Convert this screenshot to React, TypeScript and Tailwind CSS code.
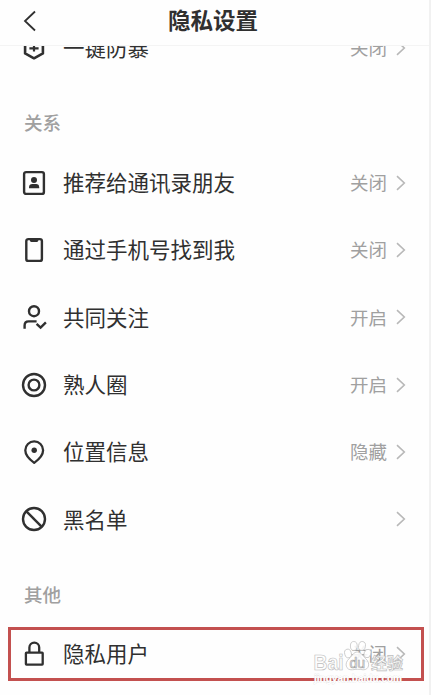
import React from 'react';

const ShieldIcon = () => (
  <svg viewBox="0 0 26 26" className="w-[26px] h-[26px]" fill="none" stroke="currentColor" strokeWidth="2.6" strokeLinejoin="round">
    <path d="M13 1.5 4.1 4.8v13.6l8.9 4.9 8.9-4.9V4.8z" />
    <path d="M13 7.5v9M8.4 13.4h9.2" strokeWidth="2.2" />
  </svg>
);

const ContactIcon = () => (
  <svg viewBox="0 0 26 26" className="w-[26px] h-[26px]" fill="none" stroke="currentColor" strokeWidth="2.4">
    <rect x="3.1" y="2.1" width="19.8" height="21.8" rx="2" />
    <circle cx="13" cy="9.9" r="3" fill="currentColor" stroke="none" />
    <path d="M8 18.3v-1.1c0-2 1.4-3.1 3.3-3.1h3.8c1.9 0 3.1 1.1 3.1 3.1v1.1z" fill="currentColor" stroke="none" />
  </svg>
);

const PhoneIcon = () => (
  <svg viewBox="0 0 26 26" className="w-[26px] h-[26px]" fill="none" stroke="currentColor" strokeWidth="2.4">
    <rect x="5.3" y="2.1" width="15.6" height="21.8" rx="2" />
    <path d="M8.9 2.2h8.4v1.4a1.4 1.4 0 0 1-1.4 1.4h-5.6a1.4 1.4 0 0 1-1.4-1.4z" fill="currentColor" stroke="none" />
  </svg>
);

const FollowIcon = () => (
  <svg viewBox="0 0 26 26" className="w-[26px] h-[26px]" fill="none" stroke="currentColor" strokeWidth="2.4">
    <circle cx="13" cy="7.2" r="5" />
    <path d="M3.6 24.8v-3.2c0-2.6 1.4-4.2 4-4.2h8" />
    <path d="m15.6 19.9 4 3.7 5.3-5.3" />
  </svg>
);

const CircleIcon = () => (
  <svg viewBox="0 0 26 26" className="w-[26px] h-[26px]" fill="none" stroke="currentColor" strokeWidth="2.4">
    <circle cx="13" cy="13" r="11" />
    <circle cx="13" cy="13" r="5.4" />
  </svg>
);

const LocationIcon = () => (
  <svg viewBox="0 0 26 26" className="w-[26px] h-[26px]" fill="none" stroke="currentColor" strokeWidth="2.3" strokeLinejoin="round">
    <path d="M13.2 23.9C8.9 20.8 4.3 16.7 4.3 11.3a8.9 8.9 0 0 1 17.8 0c0 5.4-4.6 9.5-8.9 12.6z" />
    <circle cx="13.2" cy="11.2" r="2.7" fill="currentColor" stroke="none" />
  </svg>
);

const BlockIcon = () => (
  <svg viewBox="0 0 26 26" className="w-[26px] h-[26px]" fill="none" stroke="currentColor" strokeWidth="2.4">
    <circle cx="13" cy="13" r="11" />
    <path d="m5.2 5.2 15.6 15.6" />
  </svg>
);

const LockIcon = () => (
  <svg viewBox="0 0 26 26" className="w-[26px] h-[26px]" fill="none" stroke="currentColor" strokeWidth="2.3">
    <rect x="4.9" y="11.6" width="16.8" height="12" rx="0.6" />
    <path d="M8.4 11.6V6.5a4.9 4.9 0 0 1 9.8 0v5.1" />
  </svg>
);

interface Item {
  icon: React.FC;
  label: string;
  value?: string;
}

const relationItems: Item[] = [
  { icon: ContactIcon, label: '推荐给通讯录朋友', value: '关闭' },
  { icon: PhoneIcon, label: '通过手机号找到我', value: '关闭' },
  { icon: FollowIcon, label: '共同关注', value: '开启' },
  { icon: CircleIcon, label: '熟人圈', value: '开启' },
  { icon: LocationIcon, label: '位置信息', value: '隐藏' },
  { icon: BlockIcon, label: '黑名单' },
];

function SettingRow({ icon: Icon, label, value }: Item) {
  return (
    <div className="flex h-[67.35px] shrink-0 items-center pl-[21px] pr-[22px]">
      <span className="text-[#303030]">
        <Icon />
      </span>
      <span className="ml-4 pb-[2px] text-[21.5px] leading-none text-[#303030]">{label}</span>
      <span className="ml-auto pb-px text-[18.5px] leading-none text-[#a0a0a0]">{value}</span>
      <svg viewBox="0 0 12 18" className="ml-[8px] h-[18px] w-[12px]" fill="none" stroke="#b8b8b8" strokeWidth="1.6">
        <path d="m2 2.2 7.3 6.8L2 15.8" />
      </svg>
    </div>
  );
}

function SectionTitle({ children }: { children: React.ReactNode }) {
  return (
    <h2 className="h-[67.35px] shrink-0 pl-6 pt-[31.5px] text-[18.5px] font-medium leading-[19px] text-[#a0a0a0]">
      {children}
    </h2>
  );
}

function Watermark() {
  return (
    <svg viewBox="0 0 94 48" className="absolute left-[312px] top-[639px] h-[48px] w-[94px]" fontFamily='"Liberation Sans", "Noto Sans CJK SC", sans-serif'>
      <g fill="#fff" fillOpacity="0.88" stroke="#bdbdbd" strokeWidth="0.7">
        <text x="1.5" y="30.5" fontSize="22.5" fontWeight="700" textLength="30" lengthAdjust="spacingAndGlyphs">Bai</text>
        <ellipse cx="36" cy="14.5" rx="3.3" ry="4.4" transform="rotate(-15 36 14.5)" />
        <ellipse cx="41.8" cy="7" rx="3.4" ry="4.5" />
        <ellipse cx="50" cy="7" rx="3.4" ry="4.5" transform="rotate(10 50 7)" />
        <ellipse cx="55.5" cy="14.5" rx="3.3" ry="4.3" transform="rotate(20 55.5 14.5)" />
        <path d="M45.5 13c4 0 5 4 8.2 6.7 5 4.3 3.3 11.3-2.6 11.1-4-.7-6.8-.7-10.8 0-6.6.6-8.3-6.7-3.2-11.1 3.3-2.9 4.1-6.7 8.4-6.7z" />
        <text x="37.5" y="28.5" fontSize="14" stroke="#a8a8a8">du</text>
        <text x="59" y="30" fontSize="16" fontWeight="700" textLength="32" lengthAdjust="spacingAndGlyphs">经验</text>
      </g>
      <text x="2" y="42.5" fontSize="11.5" fontWeight="700" fill="#fff" stroke="#dcdcdc" strokeWidth="0.5" paintOrder="stroke" textLength="88" lengthAdjust="spacingAndGlyphs">jingyan.baidu.com</text>
    </svg>
  );
}

export default function App() {
  return (
    <div className="relative flex h-[695px] w-[431px] flex-col overflow-hidden border-r-2 border-[#f1f1f1] bg-[#fefefe] font-['Noto_Sans_CJK_SC',sans-serif]">
      {/* Header */}
      <header className="flex h-[46px] shrink-0 items-center border-b border-[#f4f4f4] pb-[3px]">
        <button className="flex w-12 justify-center pl-[11px]">
          <svg viewBox="0 0 14 22" className="h-[22px] w-[14px]" fill="none" stroke="#303030" strokeWidth="1.8">
            <path d="M12 1.5 2 11l10 9.5" />
          </svg>
        </button>
        <h1 className="flex-1 pb-[3px] pr-[51px] text-center text-[22.5px] font-bold leading-none text-[#303030]">隐私设置</h1>
      </header>

      {/* Settings list, scrolled part of the way under the header */}
      <main className="min-h-0 flex-1 overflow-hidden">
        <div className="-mt-[31.7px] flex flex-col">
          <SettingRow icon={ShieldIcon} label="一键防暴" value="关闭" />
          <SectionTitle>关系</SectionTitle>
          {relationItems.map((item) => (
            <SettingRow key={item.label} {...item} />
          ))}
          <SectionTitle>其他</SectionTitle>
          <SettingRow icon={LockIcon} label="隐私用户" value="关闭" />
        </div>
      </main>

      {/* Highlight frame around the last row */}
      <div className="pointer-events-none absolute left-[8px] top-[627px] h-[54px] w-[416px] border-[3px] border-[#c3504f]" />
      <Watermark />
    </div>
  );
}
